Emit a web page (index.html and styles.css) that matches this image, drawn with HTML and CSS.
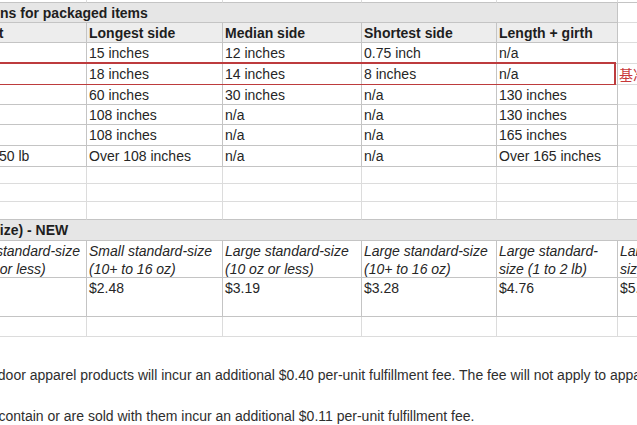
FILE: index.html
```html
<!DOCTYPE html>
<html lang="en">
<head>
<meta charset="utf-8">
<title>Size tiers and fees</title>
<link rel="stylesheet" href="styles.css">
</head>
<body>
<div class="sheet">
  <div class="row edge">
    <div class="cell g"></div><div class="cell g"></div><div class="cell g"></div><div class="cell g"></div><div class="cell g"></div><div class="cell g"></div>
  </div>
  <div class="row h20">
    <div class="cell span5 tt t1">Dimensions for packaged items</div><div class="cell g"></div>
  </div>
  <div class="row h20">
    <div class="cell hd">Weight</div><div class="cell hd">Longest side</div><div class="cell hd">Median side</div><div class="cell hd">Shortest side</div><div class="cell hd">Length + girth</div><div class="cell g"></div>
  </div>
  <div class="row h21">
    <div class="cell">12 oz</div><div class="cell">15 inches</div><div class="cell">12 inches</div><div class="cell">0.75 inch</div><div class="cell">n/a</div><div class="cell g"></div>
  </div>
  <div class="row h21 marked">
    <div class="cell">20 lb</div><div class="cell">18 inches</div><div class="cell">14 inches</div><div class="cell">8 inches</div><div class="cell">n/a</div><div class="cell g note">基准尺寸</div>
    <div class="mark"></div>
  </div>
  <div class="row h20">
    <div class="cell">70 lb</div><div class="cell">60 inches</div><div class="cell">30 inches</div><div class="cell">n/a</div><div class="cell">130 inches</div><div class="cell g"></div>
  </div>
  <div class="row h20">
    <div class="cell">150 lb</div><div class="cell">108 inches</div><div class="cell">n/a</div><div class="cell">n/a</div><div class="cell">130 inches</div><div class="cell g"></div>
  </div>
  <div class="row h21">
    <div class="cell">150 lb</div><div class="cell">108 inches</div><div class="cell">n/a</div><div class="cell">n/a</div><div class="cell">165 inches</div><div class="cell g"></div>
  </div>
  <div class="row h21">
    <div class="cell">Over 150 lb</div><div class="cell">Over 108 inches</div><div class="cell">n/a</div><div class="cell">n/a</div><div class="cell">Over 165 inches</div><div class="cell g"></div>
  </div>
  <div class="row h17">
    <div class="cell g"></div><div class="cell g"></div><div class="cell g"></div><div class="cell g"></div><div class="cell g"></div><div class="cell g"></div>
  </div>
  <div class="row h18">
    <div class="cell g"></div><div class="cell g"></div><div class="cell g"></div><div class="cell g"></div><div class="cell g"></div><div class="cell g"></div>
  </div>
  <div class="row h18 pre-table">
    <div class="cell g"></div><div class="cell g"></div><div class="cell g"></div><div class="cell g"></div><div class="cell g"></div><div class="cell g"></div>
  </div>
  <div class="row h21">
    <div class="cell span6 tt t2">Fulfillment fees (standard-size) - NEW</div>
  </div>
  <div class="row h37">
    <div class="cell it">Small standard-size (10 oz or less)</div>
    <div class="cell it">Small standard-size (10+ to 16 oz)</div>
    <div class="cell it">Large standard-size (10 oz or less)</div>
    <div class="cell it">Large standard-size (10+ to 16 oz)</div>
    <div class="cell it">Large standard-size (1 to 2 lb)</div>
    <div class="cell it">Large standard-size (2 to 3 lb)</div>
  </div>
  <div class="row h39">
    <div class="cell">$2.41</div><div class="cell">$2.48</div><div class="cell">$3.19</div><div class="cell">$3.28</div><div class="cell">$4.76</div><div class="cell">$5.26</div>
  </div>
  <div class="row h20">
    <div class="cell g"></div><div class="cell g"></div><div class="cell g"></div><div class="cell g"></div><div class="cell g"></div><div class="cell g"></div>
  </div>
</div>
<div class="notes">
  <p class="n1">Non-outdoor apparel products will incur an additional $0.40 per-unit fulfillment fee. The fee will not apply to apparel products that are outdoor items.</p>
  <p class="n2">Lithium batteries and items that contain or are sold with them incur an additional $0.11 per-unit fulfillment fee.</p>
</div>
</body>
</html>
```
FILE: styles.css
```css
html, body {
  margin: 0;
  padding: 0;
  overflow: hidden;
  background: #ffffff;
}

body {
  font-family: "Liberation Sans", Arial, sans-serif;
  font-size: 14px;
  color: #262626;
}

.sheet {
  margin-left: -45px;
  width: 784px;
}

.row {
  display: grid;
  grid-template-columns: 132px 136px 139px 135px 121px 121px;
  position: relative;
}

.cell {
  box-sizing: border-box;
  border-right: 1px solid #c4c4c4;
  border-bottom: 1px solid #c4c4c4;
  padding: 1px 2px 0;
  line-height: 18px;
  white-space: nowrap;
  overflow: hidden;
  background: #ffffff;
}

.cell.g {
  border-right-color: #dcdcdc;
  border-bottom-color: #dcdcdc;
}

.edge { height: 3px; }
.edge .cell { padding: 0; border-bottom-color: #c4c4c4; }
.pre-table .cell { border-bottom-color: #c4c4c4; }

.h17 { height: 17px; }
.h18 { height: 18px; }
.h20 { height: 20px; }
.h21 { height: 21px; }
.h37 { height: 37px; }
.h39 { height: 39px; }

.span5 { grid-column: span 5; }
.span6 { grid-column: span 6; }

.tt {
  background: #e6e6e6;
  font-weight: bold;
  color: #1e1e1e;
}

.t1 { text-indent: -20px; }
.t2 { text-indent: -140px; }

.hd {
  background: #ededed;
  font-weight: bold;
  color: #1e1e1e;
}

.it {
  font-style: italic;
  white-space: normal;
}

.note {
  color: #c8383a;
  font-family: "Noto Sans CJK SC", sans-serif;
  font-size: 14px;
  padding-left: 1px;
}

.mark {
  position: absolute;
  left: 30px;
  top: -2px;
  width: 631px;
  height: 24px;
  box-sizing: border-box;
  border: 2px solid #bd3b3d;
  pointer-events: none;
}

.notes p {
  margin: 0;
  line-height: 18px;
  white-space: nowrap;
  color: #2e2e2e;
}

.notes .n1 {
  margin-top: 29px;
  text-indent: -52px;
}

.notes .n2 {
  margin-top: 23px;
  text-indent: -200px;
}
```
